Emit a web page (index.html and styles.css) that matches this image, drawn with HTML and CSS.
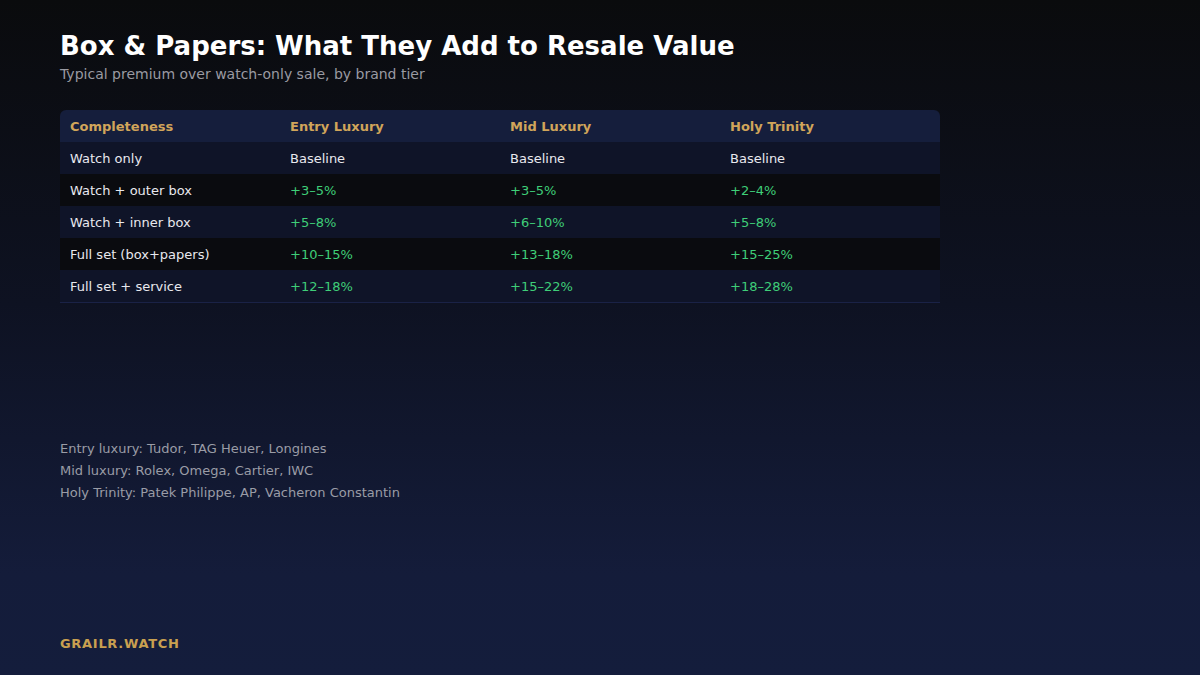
FILE: index.html
```html
<!DOCTYPE html>
<html>
<head>
<meta charset="utf-8">
<link rel="stylesheet" href="styles.css">
</head>
<body>
<div class="page">
  <h1 class="title">Box &amp; Papers: What They Add to Resale Value</h1>
  <p class="subtitle">Typical premium over watch-only sale, by brand tier</p>
  <div class="table">
    <div class="row head">
      <div class="cell">Completeness</div>
      <div class="cell">Entry Luxury</div>
      <div class="cell">Mid Luxury</div>
      <div class="cell">Holy Trinity</div>
    </div>
    <div class="row odd">
      <div class="cell">Watch only</div>
      <div class="cell">Baseline</div>
      <div class="cell">Baseline</div>
      <div class="cell">Baseline</div>
    </div>
    <div class="row even">
      <div class="cell">Watch + outer box</div>
      <div class="cell up">+3–5%</div>
      <div class="cell up">+3–5%</div>
      <div class="cell up">+2–4%</div>
    </div>
    <div class="row odd">
      <div class="cell">Watch + inner box</div>
      <div class="cell up">+5–8%</div>
      <div class="cell up">+6–10%</div>
      <div class="cell up">+5–8%</div>
    </div>
    <div class="row even">
      <div class="cell">Full set (box+papers)</div>
      <div class="cell up">+10–15%</div>
      <div class="cell up">+13–18%</div>
      <div class="cell up">+15–25%</div>
    </div>
    <div class="row odd last">
      <div class="cell">Full set + service</div>
      <div class="cell up">+12–18%</div>
      <div class="cell up">+15–22%</div>
      <div class="cell up">+18–28%</div>
    </div>
  </div>
  <div class="notes">
    <p>Entry luxury: Tudor, TAG Heuer, Longines</p>
    <p>Mid luxury: Rolex, Omega, Cartier, IWC</p>
    <p>Holy Trinity: Patek Philippe, AP, Vacheron Constantin</p>
  </div>
  <div class="brand">GRAILR.WATCH</div>
</div>
</body>
</html>
```
FILE: styles.css
```css
html, body {
  margin: 0;
  padding: 0;
}
body {
  width: 1200px;
  height: 675px;
  overflow: hidden;
  font-family: "DejaVu Sans", sans-serif;
  background: linear-gradient(180deg, #0a0b0d 0%, #0e1222 45%, #141c3a 85%, #141d3c 100%);
  color: #e8e8ee;
}
.page {
  height: 675px;
  box-sizing: border-box;
  padding: 30px 60px 24px;
  display: flex;
  flex-direction: column;
}
.title {
  margin: 0;
  font-size: 26px;
  line-height: 32px;
  font-weight: bold;
  color: #ffffff;
}
.subtitle {
  margin: 2px 0 0;
  font-size: 14px;
  line-height: 20px;
  color: #9a9aa2;
}
.table {
  margin-top: 26px;
  width: 880px;
  font-size: 13px;
}
.row {
  display: grid;
  grid-template-columns: 220px 220px 220px 220px;
  height: 32px;
  align-items: center;
}
.cell {
  padding-left: 10px;
}
.head {
  background: #151e3c;
  border-radius: 6px 6px 0 0;
  font-weight: bold;
  color: #d1a55a;
}
.odd {
  background: #0f1428;
}
.even {
  background: #0a0b0f;
}
.last {
  border-bottom: 1px solid #1a2246;
}
.up {
  color: #3fce78;
}
.notes {
  margin-top: 135px;
  font-size: 13px;
  color: #9a9ca6;
}
.notes p {
  margin: 0;
  line-height: 22px;
}
.brand {
  margin-top: auto;
  font-size: 13px;
  font-weight: bold;
  color: #c9a050;
  letter-spacing: 0.7px;
}
```
